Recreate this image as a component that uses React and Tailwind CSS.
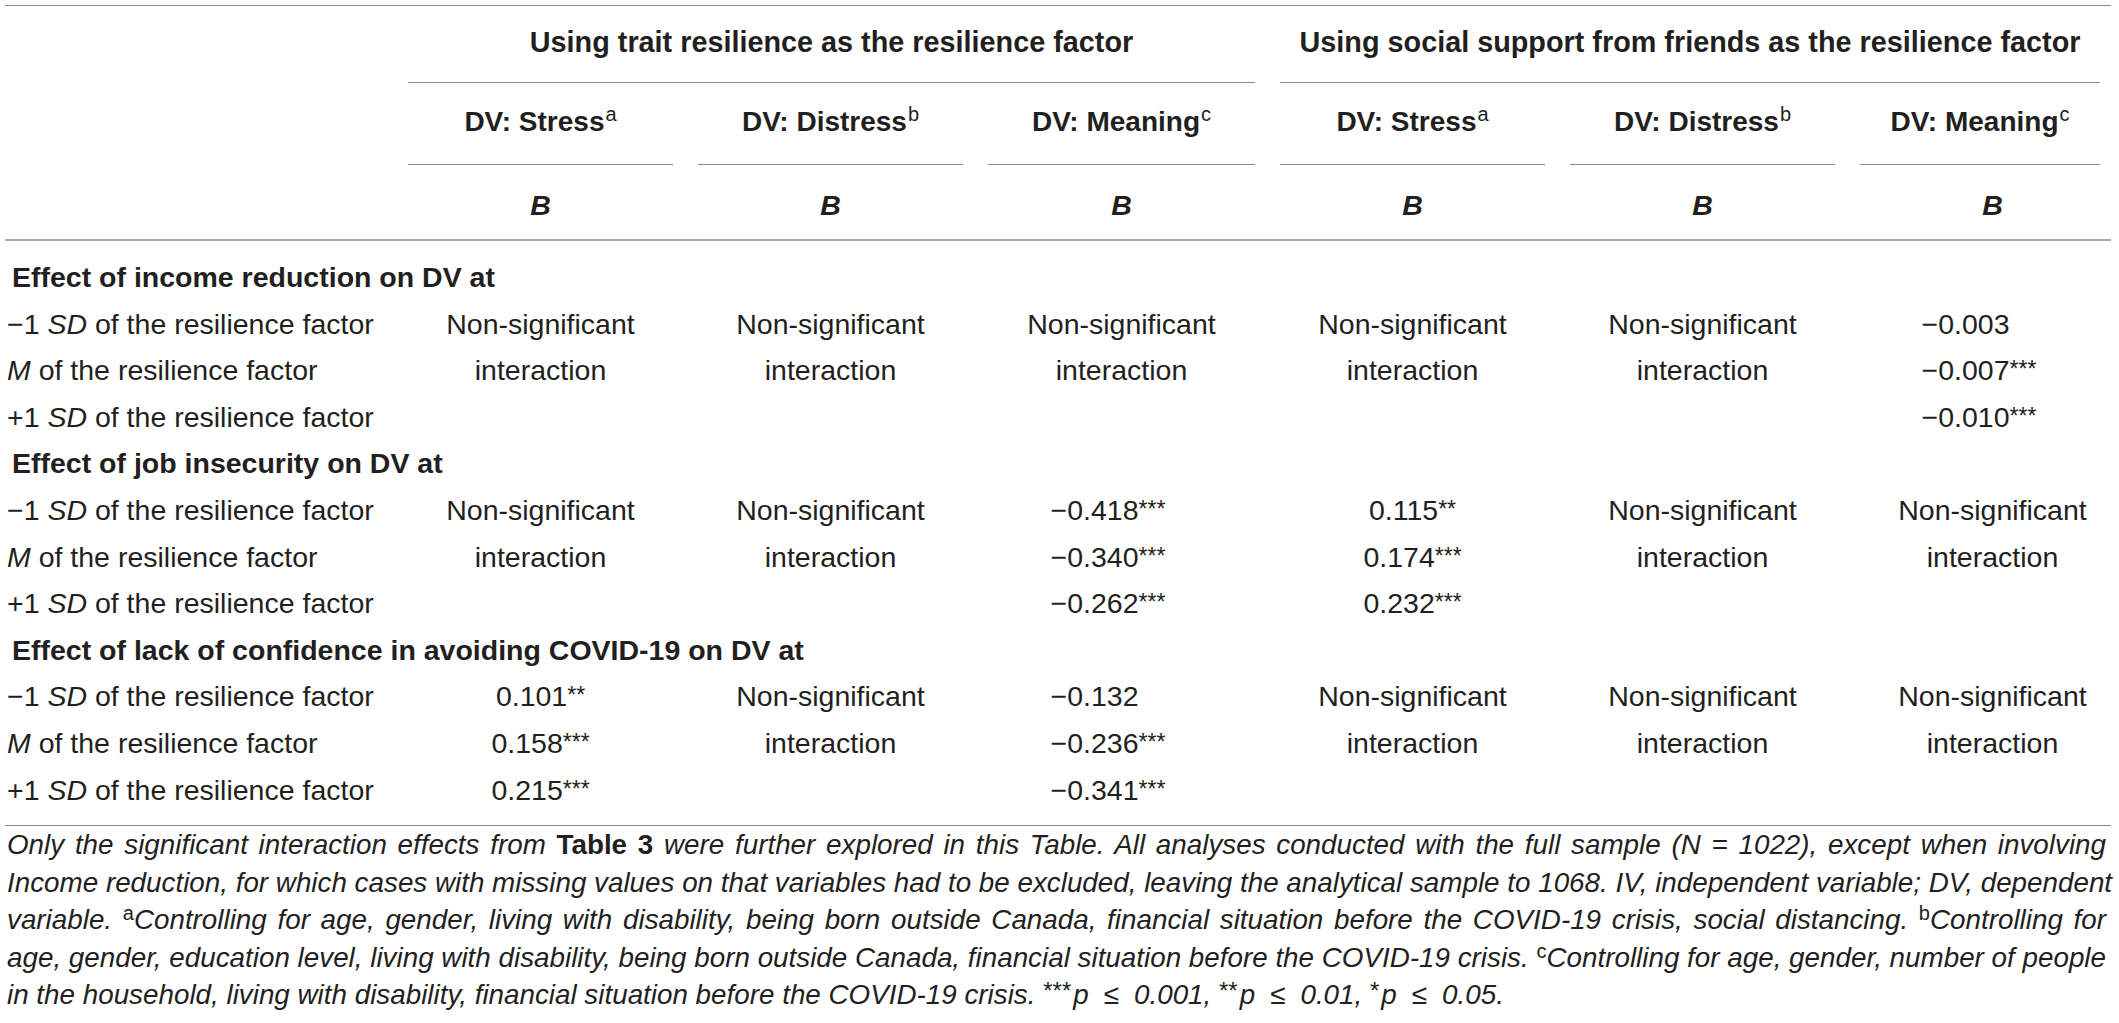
import React from "react";

const NS = "NS";

const sections = [
  {
    title: "Effect of income reduction on DV at",
    cells: [NS, NS, NS, NS, NS, { left: true, v: [["−0.003", ""], ["−0.007", "***"], ["−0.010", "***"]] }],
  },
  {
    title: "Effect of job insecurity on DV at",
    cells: [
      NS,
      NS,
      { left: true, v: [["−0.418", "***"], ["−0.340", "***"], ["−0.262", "***"]] },
      { left: false, v: [["0.115", "**"], ["0.174", "***"], ["0.232", "***"]] },
      NS,
      NS,
    ],
  },
  {
    title: "Effect of lack of confidence in avoiding COVID-19 on DV at",
    cells: [
      { left: false, v: [["0.101", "**"], ["0.158", "***"], ["0.215", "***"]] },
      NS,
      { left: true, v: [["−0.132", ""], ["−0.236", "***"], ["−0.341", "***"]] },
      NS,
      NS,
      NS,
    ],
  },
];

const levels = [
  <>−1 <i>SD</i> of the resilience factor</>,
  <><i>M</i> of the resilience factor</>,
  <>+1 <i>SD</i> of the resilience factor</>,
];

function Stars({ s }) {
  if (!s) return null;
  return <sup className="text-[23px] top-[-3px]">{s}</sup>;
}

function HSup({ children }) {
  return <sup className="text-[20px] font-normal top-[-10px] ml-[1px]">{children}</sup>;
}

function FSup({ children }) {
  return <sup className="text-[20px] not-italic top-[-9px]">{children}</sup>;
}

function FStar({ children }) {
  return <sup className="text-[24px] not-italic top-[-5px] mr-[2px]">{children}</sup>;
}

function Le() {
  return <span className="ml-[15px] mr-[15px]">≤</span>;
}

function Cell({ c }) {
  if (c === NS) {
    return (
      <div className="row-span-3 text-center leading-[46.6px]">
        <div>Non-significant</div>
        <div>interaction</div>
      </div>
    );
  }
  if (c.left) {
    return (
      <div className="row-span-3 flex justify-center pr-[27px] leading-[46.6px]">
        <div className="text-left">
          {c.v.map(([n, s], i) => (
            <div key={i} className="whitespace-nowrap">
              {n}
              <Stars s={s} />
            </div>
          ))}
        </div>
      </div>
    );
  }
  return (
    <div className="row-span-3 text-center leading-[46.6px]">
      {c.v.map(([n, s], i) => (
        <div key={i} className="whitespace-nowrap">
          {n}
          <Stars s={s} />
        </div>
      ))}
    </div>
  );
}

const cols = "grid grid-cols-[378px_265px_265px_267px_265px_265px_265px] gap-x-[25px]";

function FLine({ children, last }) {
  return (
    <div className={last ? "text-left whitespace-nowrap" : "text-justify [text-align-last:justify] whitespace-nowrap"}>
      {children}
    </div>
  );
}

export default function App() {
  const dv = [
    ["DV: Stress", "a"],
    ["DV: Distress", "b"],
    ["DV: Meaning", "c"],
    ["DV: Stress", "a"],
    ["DV: Distress", "b"],
    ["DV: Meaning", "c"],
  ];
  return (
    <div className="w-[2119px] h-[1023px] overflow-hidden bg-white text-[#231f20] font-['Liberation_Sans',Arial,sans-serif]">
      <div className="ml-[5px] w-[2106px] pt-[5px]">
        <div className="h-px bg-[#8a8a8a]" />
        {/* header */}
        <div className={cols + " w-[2118px]"}>
          <div />
          <div className="col-span-3 h-[77px] pb-[2px] flex items-center justify-center border-b border-[#8a8a8a] text-[28.8px] font-bold">
            Using trait resilience as the resilience factor
          </div>
          <div className="col-span-3 mr-[25px] h-[77px] pb-[2px] flex items-center justify-center border-b border-[#8a8a8a] text-[28.8px] font-bold">
            Using social support from friends as the resilience factor
          </div>
          <div />
          {dv.map(([t, s], i) => (
            <div
              key={i}
              className={
                "h-[82px] pb-[3px] flex items-center justify-center border-b border-[#8a8a8a] text-[28px] font-bold whitespace-nowrap" +
                (i === 5 ? " mr-[25px]" : "")
              }
            >
              <span>
                {t}
                <HSup>{s}</HSup>
              </span>
            </div>
          ))}
          <div />
          {dv.map((_, i) => (
            <div key={i} className="h-[74px] pt-[6px] flex items-center justify-center text-[28.5px] font-bold italic">
              B
            </div>
          ))}
        </div>
        <div className="h-[2px] bg-[#a9a9a9]" />
        {/* body */}
        <div className={cols + " w-[2118px] auto-rows-[46.6px] mt-[13px] text-[28.5px]"}>
          {sections.map((sec, si) => (
            <React.Fragment key={si}>
              <div className="col-span-7 pl-[7px] font-bold text-[28.5px] leading-[46.6px] whitespace-nowrap">
                {sec.title}
              </div>
              <div className="pl-[2px] leading-[46.6px] whitespace-nowrap">{levels[0]}</div>
              {sec.cells.map((c, ci) => (
                <Cell key={ci} c={c} />
              ))}
              <div className="pl-[2px] leading-[46.6px] whitespace-nowrap">{levels[1]}</div>
              <div className="pl-[2px] leading-[46.6px] whitespace-nowrap">{levels[2]}</div>
            </React.Fragment>
          ))}
        </div>
        <div className="mt-[12px] h-px bg-[#8a8a8a]" />
        {/* footnote */}
        <div className="pl-[2px] w-[2101px] italic text-[27.8px] leading-[37.5px]">
          <FLine>
            Only the significant interaction effects from <b className="not-italic">Table 3</b> were further explored in
            this Table. All analyses conducted with the full sample (N = 1022), except when involving
          </FLine>
          <FLine>
            Income reduction, for which cases with missing values on that variables had to be excluded, leaving the
            analytical sample to 1068. IV, independent variable; DV, dependent
          </FLine>
          <FLine>
            variable. <FSup>a</FSup>Controlling for age, gender, living with disability, being born outside Canada,
            financial situation before the COVID-19 crisis, social distancing. <FSup>b</FSup>Controlling for
          </FLine>
          <FLine>
            age, gender, education level, living with disability, being born outside Canada, financial situation before
            the COVID-19 crisis. <FSup>c</FSup>Controlling for age, gender, number of people
          </FLine>
          <FLine last>
            in the household, living with disability, financial situation before the COVID-19 crisis.{" "}
            <FStar>***</FStar>p<Le />0.001, <FStar>**</FStar>p<Le />0.01, <FStar>*</FStar>p<Le />0.05.
          </FLine>
        </div>
      </div>
    </div>
  );
}
